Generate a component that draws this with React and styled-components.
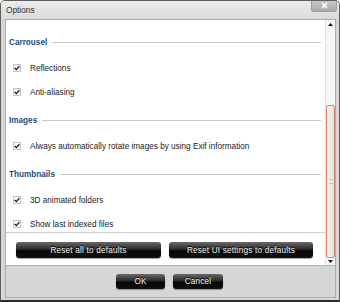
import React from "react";
import styled, { createGlobalStyle } from "styled-components";

const GlobalStyle = createGlobalStyle`
  html, body {
    margin: 0;
    padding: 0;
    background: #ffffff;
  }
  body {
    font-family: "Liberation Sans", Arial, sans-serif;
  }
`;

const Window = styled.div`
  width: 340px;
  height: 302px;
  box-sizing: border-box;
  display: flex;
  flex-direction: column;
  background: #d6d6d6;
  border: 1px solid #5e5e5e;
  border-bottom: 2px solid #2a2a2a;
  border-radius: 5px 5px 0 0;
  overflow: hidden;
`;

const TitleBar = styled.div`
  height: 18px;
  flex-shrink: 0;
  display: flex;
  justify-content: space-between;
  align-items: flex-start;
  padding-left: 5px;
  padding-right: 2px;
  background: linear-gradient(#ececec, #dadada);
`;

const Title = styled.span`
  font-size: 8.3px;
  line-height: 19px;
  color: #333333;
`;

const CloseButton = styled.div`
  width: 24px;
  height: 11px;
  margin-top: -1px;
  display: flex;
  align-items: center;
  justify-content: center;
  background: linear-gradient(#cdcdcd, #a9a9a9);
  border: 1px solid #9c9c9c;
  border-top: none;
  border-radius: 0 0 3px 3px;
`;

const Frame = styled.div`
  flex: 1;
  min-height: 0;
  display: flex;
  flex-direction: column;
  margin: 0 3px 2px 4px;
  border: 1px solid #acacac;
`;

const Panel = styled.div`
  flex: 1;
  min-height: 0;
  display: flex;
  background: #ffffff;
  border-bottom: 1px solid #b4b4b4;
`;

const MainColumn = styled.div`
  flex: 1;
  min-width: 0;
  min-height: 0;
  display: flex;
  flex-direction: column;
`;

const ScrollArea = styled.div`
  flex: 1;
  min-height: 0;
  overflow: hidden;
  padding: 15px 4px 0 3px;
`;

const Section = styled.div`
  margin-bottom: 12px;
`;

const SectionHeader = styled.div`
  height: 14px;
  display: flex;
  align-items: center;
  margin-bottom: 10px;
`;

const HeaderText = styled.span`
  font-size: 8.2px;
  font-weight: bold;
  color: #1f4a7c;
`;

const HeaderLine = styled.div`
  flex: 1;
  height: 1px;
  margin-left: 5px;
  background: #c9c9c9;
`;

const Options = styled.div`
  display: flex;
  flex-direction: column;
  gap: 6px;
`;

const OptionRow = styled.label`
  height: 18px;
  display: flex;
  align-items: center;
  padding-left: 4px;
  font-size: 8.2px;
  color: #1a1a1a;
`;

const Box = styled.span`
  width: 8px;
  height: 8px;
  box-sizing: border-box;
  margin-right: 9px;
  display: flex;
  align-items: center;
  justify-content: center;
  border: 1px solid #c4c4c4;
  background: #fafafa;
`;

const ButtonBar = styled.div`
  flex-shrink: 0;
  display: grid;
  grid-template-columns: 145px 144px;
  gap: 8px;
  padding: 9px 0 7px 10px;
  border-top: 1px solid #cfcfcf;
`;

const DarkButton = styled.div`
  height: ${(p) => p.h}px;
  width: ${(p) => (p.w ? `${p.w}px` : "auto")};
  box-sizing: border-box;
  display: flex;
  align-items: center;
  justify-content: center;
  border-radius: 3px;
  background: linear-gradient(#6a6a6a 0%, #2a2a2a 45%, #050505 55%, #111111 100%);
  box-shadow: 0 1px 1px rgba(0, 0, 0, 0.35);
  color: #f4f4f4;
  font-size: 8.2px;
  letter-spacing: 0.2px;
  text-shadow: 0 -1px 0 #000;
`;

const Scrollbar = styled.div`
  width: 10px;
  flex-shrink: 0;
  display: flex;
  flex-direction: column;
  background: #f6f6f6;
  border-left: 1px solid #e2e2e2;
  box-sizing: border-box;
`;

const Arrow = styled.div`
  height: ${(p) => p.h}px;
  flex-shrink: 0;
  display: flex;
  align-items: ${(p) => (p.up ? "flex-start" : "flex-end")};
  justify-content: center;
  padding: ${(p) => (p.up ? "3px 0 0" : "0 0 2px")};
  box-sizing: border-box;
`;

const Track = styled.div`
  flex: 1;
  min-height: 0;
  display: flex;
  flex-direction: column;
  justify-content: flex-end;
`;

const Thumb = styled.div`
  height: 153px;
  box-sizing: border-box;
  display: flex;
  align-items: center;
  justify-content: center;
  border: 1px solid #d9876a;
  border-radius: 2px;
  background: linear-gradient(90deg, #f4f4f4, #e2e2e2);
`;

const Grip = styled.div`
  width: 4px;
  height: 3px;
  border-top: 1px solid #c4c4c4;
  border-bottom: 1px solid #c4c4c4;
`;

const Footer = styled.div`
  height: 31px;
  flex-shrink: 0;
  display: flex;
  align-items: center;
  justify-content: center;
  gap: 8px;
  padding-right: 2px;
  background: #d6d6d6;
`;

const Check = () => (
  <svg width="7" height="6" viewBox="0 0 7 6">
    <path d="M0.8 3 L2.7 4.9 L6.2 0.9" fill="none" stroke="#111" strokeWidth="1.5" />
  </svg>
);

const sections = [
  { title: "Carrousel", items: ["Reflections", "Anti-aliasing"] },
  { title: "Images", items: ["Always automatically rotate images by using Exif information"] },
  { title: "Thumbnails", items: ["3D animated folders", "Show last indexed files"] },
];

export default function App() {
  return (
    <>
      <GlobalStyle />
      <Window>
        <TitleBar>
          <Title>Options</Title>
          <CloseButton>
            <svg width="7" height="7" viewBox="0 0 7 7">
              <path d="M1 1 L6 6 M6 1 L1 6" stroke="#fff" strokeWidth="1.6" />
            </svg>
          </CloseButton>
        </TitleBar>
        <Frame>
          <Panel>
            <MainColumn>
              <ScrollArea>
                {sections.map((s) => (
                  <Section key={s.title}>
                    <SectionHeader>
                      <HeaderText>{s.title}</HeaderText>
                      <HeaderLine />
                    </SectionHeader>
                    <Options>
                      {s.items.map((item) => (
                        <OptionRow key={item}>
                          <Box>
                            <Check />
                          </Box>
                          {item}
                        </OptionRow>
                      ))}
                    </Options>
                  </Section>
                ))}
              </ScrollArea>
              <ButtonBar>
                <DarkButton h={16}>Reset all to defaults</DarkButton>
                <DarkButton h={16}>Reset UI settings to defaults</DarkButton>
              </ButtonBar>
            </MainColumn>
            <Scrollbar>
              <Arrow up h={10}>
                <svg width="5" height="3" viewBox="0 0 5 3">
                  <path d="M0 3 L2.5 0 L5 3 Z" fill="#111" />
                </svg>
              </Arrow>
              <Track>
                <Thumb>
                  <Grip />
                </Thumb>
              </Track>
              <Arrow h={7}>
                <svg width="5" height="3" viewBox="0 0 5 3">
                  <path d="M0 0 L2.5 3 L5 0 Z" fill="#111" />
                </svg>
              </Arrow>
            </Scrollbar>
          </Panel>
          <Footer>
            <DarkButton h={15} w={49}>OK</DarkButton>
            <DarkButton h={15} w={50}>Cancel</DarkButton>
          </Footer>
        </Frame>
      </Window>
    </>
  );
}
